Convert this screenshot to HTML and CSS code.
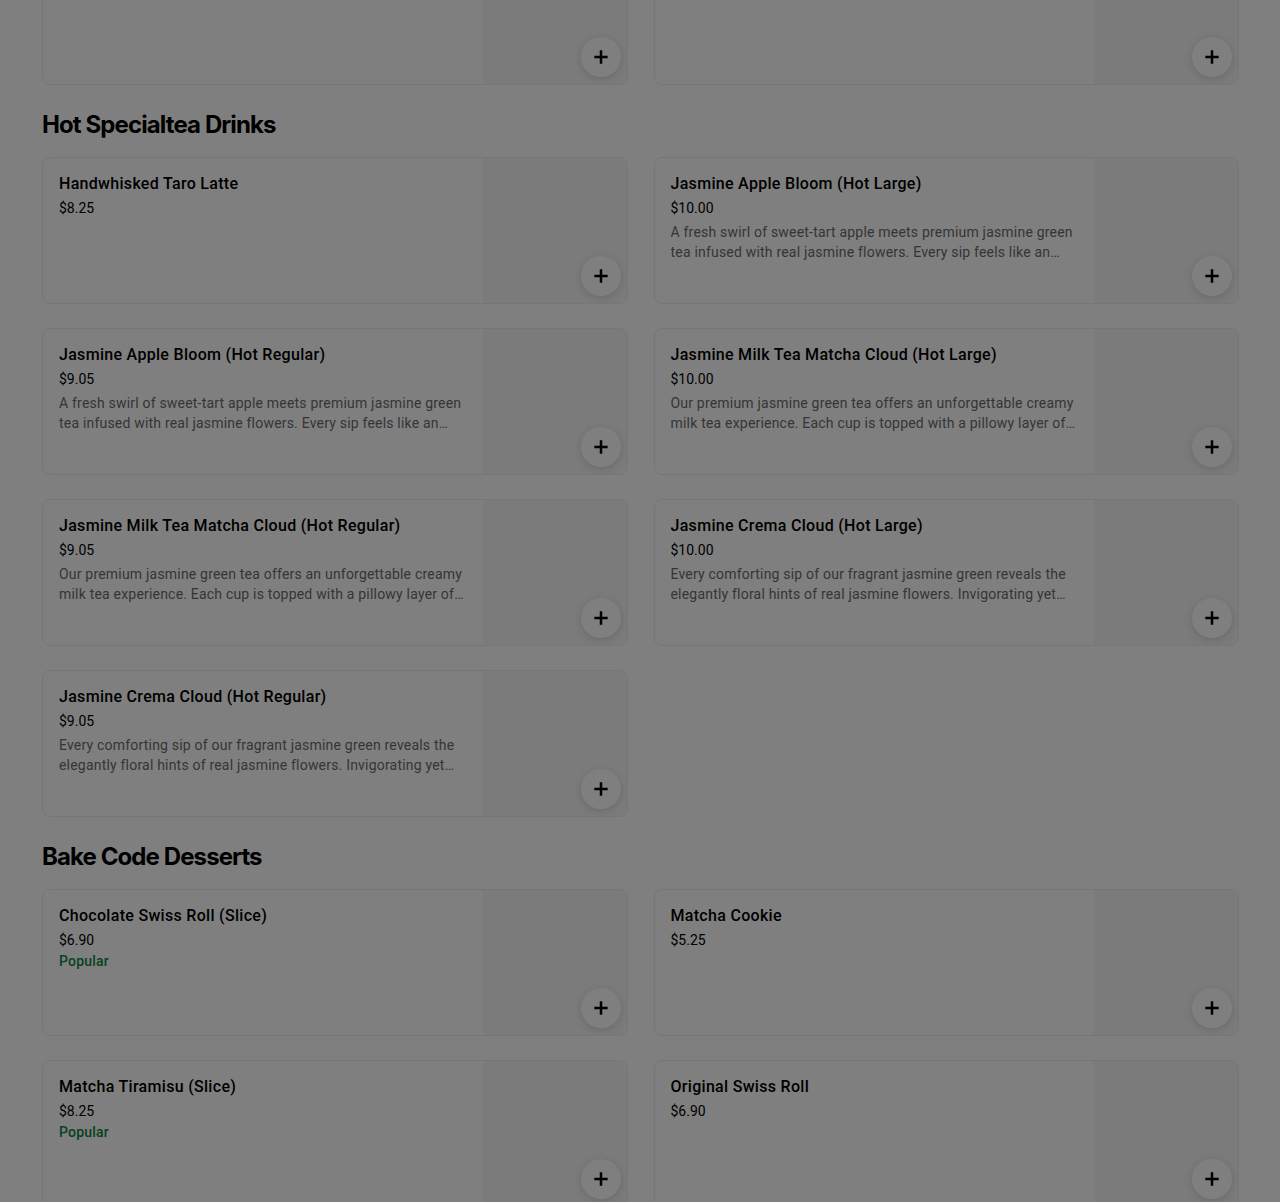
FILE: index.html
```html
<!DOCTYPE html>
<html lang="en">
<head>
    <meta charset="UTF-8">
    <meta name="viewport" content="width=device-width, initial-scale=1.0">
    <title>Menu</title>
    <link rel="stylesheet" href="styles.css">
</head>
<body>

<div class="menu">
    <!-- tail of the previous category, scrolled mostly out of view -->
    <section class="category category-cut">
        <div class="item-grid">
            <div class="item-card">
                <div class="item-info"></div>
                <div class="item-image"></div>
                <button class="add-btn" aria-label="Add"><svg viewBox="0 0 24 24"><path d="M13.5 4h-3v6.5H4v3h6.5V20h3v-6.5H20v-3h-6.5z"/></svg></button>
            </div>
            <div class="item-card">
                <div class="item-info"></div>
                <div class="item-image"></div>
                <button class="add-btn" aria-label="Add"><svg viewBox="0 0 24 24"><path d="M13.5 4h-3v6.5H4v3h6.5V20h3v-6.5H20v-3h-6.5z"/></svg></button>
            </div>
        </div>
    </section>

    <section class="category">
        <h3 class="category-title">Hot Specialtea Drinks</h3>
        <div class="item-grid">
            <div class="item-card">
                <div class="item-info">
                    <div class="item-name">Handwhisked Taro Latte</div>
                    <div class="item-price">$8.25</div>
                </div>
                <div class="item-image"></div>
                <button class="add-btn" aria-label="Add"><svg viewBox="0 0 24 24"><path d="M13.5 4h-3v6.5H4v3h6.5V20h3v-6.5H20v-3h-6.5z"/></svg></button>
            </div>
            <div class="item-card">
                <div class="item-info">
                    <div class="item-name">Jasmine Apple Bloom (Hot Large)</div>
                    <div class="item-price">$10.00</div>
                    <div class="item-desc">A fresh swirl of sweet-tart apple meets premium jasmine green tea infused with real jasmine flowers. Every sip feels like an afternoon stroll through a blooming orchard.</div>
                </div>
                <div class="item-image"></div>
                <button class="add-btn" aria-label="Add"><svg viewBox="0 0 24 24"><path d="M13.5 4h-3v6.5H4v3h6.5V20h3v-6.5H20v-3h-6.5z"/></svg></button>
            </div>
            <div class="item-card">
                <div class="item-info">
                    <div class="item-name">Jasmine Apple Bloom (Hot Regular)</div>
                    <div class="item-price">$9.05</div>
                    <div class="item-desc">A fresh swirl of sweet-tart apple meets premium jasmine green tea infused with real jasmine flowers. Every sip feels like an afternoon stroll through a blooming orchard.</div>
                </div>
                <div class="item-image"></div>
                <button class="add-btn" aria-label="Add"><svg viewBox="0 0 24 24"><path d="M13.5 4h-3v6.5H4v3h6.5V20h3v-6.5H20v-3h-6.5z"/></svg></button>
            </div>
            <div class="item-card">
                <div class="item-info">
                    <div class="item-name">Jasmine Milk Tea Matcha Cloud (Hot Large)</div>
                    <div class="item-price">$10.00</div>
                    <div class="item-desc">Our premium jasmine green tea offers an unforgettable creamy milk tea experience. Each cup is topped with a pillowy layer of matcha cloud foam.</div>
                </div>
                <div class="item-image"></div>
                <button class="add-btn" aria-label="Add"><svg viewBox="0 0 24 24"><path d="M13.5 4h-3v6.5H4v3h6.5V20h3v-6.5H20v-3h-6.5z"/></svg></button>
            </div>
            <div class="item-card">
                <div class="item-info">
                    <div class="item-name">Jasmine Milk Tea Matcha Cloud (Hot Regular)</div>
                    <div class="item-price">$9.05</div>
                    <div class="item-desc">Our premium jasmine green tea offers an unforgettable creamy milk tea experience. Each cup is topped with a pillowy layer of matcha cloud foam.</div>
                </div>
                <div class="item-image"></div>
                <button class="add-btn" aria-label="Add"><svg viewBox="0 0 24 24"><path d="M13.5 4h-3v6.5H4v3h6.5V20h3v-6.5H20v-3h-6.5z"/></svg></button>
            </div>
            <div class="item-card">
                <div class="item-info">
                    <div class="item-name">Jasmine Crema Cloud (Hot Large)</div>
                    <div class="item-price">$10.00</div>
                    <div class="item-desc">Every comforting sip of our fragrant jasmine green reveals the elegantly floral hints of real jasmine flowers. Invigorating yet soothing, topped with a silky crema.</div>
                </div>
                <div class="item-image"></div>
                <button class="add-btn" aria-label="Add"><svg viewBox="0 0 24 24"><path d="M13.5 4h-3v6.5H4v3h6.5V20h3v-6.5H20v-3h-6.5z"/></svg></button>
            </div>
            <div class="item-card">
                <div class="item-info">
                    <div class="item-name">Jasmine Crema Cloud (Hot Regular)</div>
                    <div class="item-price">$9.05</div>
                    <div class="item-desc">Every comforting sip of our fragrant jasmine green reveals the elegantly floral hints of real jasmine flowers. Invigorating yet soothing, topped with a silky crema.</div>
                </div>
                <div class="item-image"></div>
                <button class="add-btn" aria-label="Add"><svg viewBox="0 0 24 24"><path d="M13.5 4h-3v6.5H4v3h6.5V20h3v-6.5H20v-3h-6.5z"/></svg></button>
            </div>
        </div>
    </section>

    <section class="category">
        <h3 class="category-title">Bake Code Desserts</h3>
        <div class="item-grid">
            <div class="item-card">
                <div class="item-info">
                    <div class="item-name">Chocolate Swiss Roll (Slice)</div>
                    <div class="item-price">$6.90</div>
                    <div class="item-tag">Popular</div>
                </div>
                <div class="item-image"></div>
                <button class="add-btn" aria-label="Add"><svg viewBox="0 0 24 24"><path d="M13.5 4h-3v6.5H4v3h6.5V20h3v-6.5H20v-3h-6.5z"/></svg></button>
            </div>
            <div class="item-card">
                <div class="item-info">
                    <div class="item-name">Matcha Cookie</div>
                    <div class="item-price">$5.25</div>
                </div>
                <div class="item-image"></div>
                <button class="add-btn" aria-label="Add"><svg viewBox="0 0 24 24"><path d="M13.5 4h-3v6.5H4v3h6.5V20h3v-6.5H20v-3h-6.5z"/></svg></button>
            </div>
            <div class="item-card">
                <div class="item-info">
                    <div class="item-name">Matcha Tiramisu (Slice)</div>
                    <div class="item-price">$8.25</div>
                    <div class="item-tag">Popular</div>
                </div>
                <div class="item-image"></div>
                <button class="add-btn" aria-label="Add"><svg viewBox="0 0 24 24"><path d="M13.5 4h-3v6.5H4v3h6.5V20h3v-6.5H20v-3h-6.5z"/></svg></button>
            </div>
            <div class="item-card">
                <div class="item-info">
                    <div class="item-name">Original Swiss Roll</div>
                    <div class="item-price">$6.90</div>
                </div>
                <div class="item-image"></div>
                <button class="add-btn" aria-label="Add"><svg viewBox="0 0 24 24"><path d="M13.5 4h-3v6.5H4v3h6.5V20h3v-6.5H20v-3h-6.5z"/></svg></button>
            </div>
        </div>
    </section>
</div>

<!-- modal backdrop dimming the page -->
<div class="backdrop"></div>

</body>
</html>
```

FILE: styles.css
```css
body {
    margin: 0;
    font-family: Roboto, "Liberation Sans", sans-serif;
    background-color: #fff;
    color: #000;
    overflow: hidden;
}
.menu {
    padding: 0 41px 0 42px;
    margin-top: -62px;
}
.category-title {
    font-family: Inter, "Liberation Sans", sans-serif;
    font-size: 24px;
    line-height: 32px;
    font-weight: 700;
    letter-spacing: -0.9px;
    margin: 24px 0 16px;
}
.item-grid {
    display: grid;
    grid-template-columns: 1fr 1fr;
    column-gap: 26px;
    row-gap: 24px;
}
.item-card {
    position: relative;
    display: flex;
    height: 147px;
    box-sizing: border-box;
    border: 1px solid #ededed;
    border-radius: 8px;
    overflow: hidden;
    background-color: #fff;
}
.item-info {
    flex: 1;
    min-width: 0;
    padding: 16px 16px 15px;
}
.item-image {
    flex: none;
    width: 144px;
    background-color: #f6f6f6;
}
.item-name {
    font-size: 16px;
    line-height: 20px;
    font-weight: 500;
    letter-spacing: 0.3px;
}
.item-price {
    font-size: 14px;
    line-height: 20px;
    margin-top: 4px;
}
.item-desc {
    font-size: 14px;
    line-height: 20px;
    letter-spacing: 0.2px;
    margin-top: 4px;
    color: #6b6b6b;
    display: -webkit-box;
    -webkit-line-clamp: 2;
    -webkit-box-orient: vertical;
    overflow: hidden;
}
.item-tag {
    font-size: 14px;
    line-height: 20px;
    font-weight: 500;
    letter-spacing: 0.2px;
    margin-top: 1px;
    color: #0e8345;
}
.add-btn {
    position: absolute;
    right: 6px;
    bottom: 7px;
    width: 40px;
    height: 40px;
    padding: 0;
    border: none;
    border-radius: 50%;
    background-color: #fff;
    box-shadow: 0 2px 8px rgba(0, 0, 0, 0.14);
    display: flex;
    align-items: center;
    justify-content: center;
}
.add-btn svg {
    width: 20px;
    height: 20px;
    fill: #000;
}
.backdrop {
    position: fixed;
    inset: 0;
    background-color: rgba(0, 0, 0, 0.5);
}
```
